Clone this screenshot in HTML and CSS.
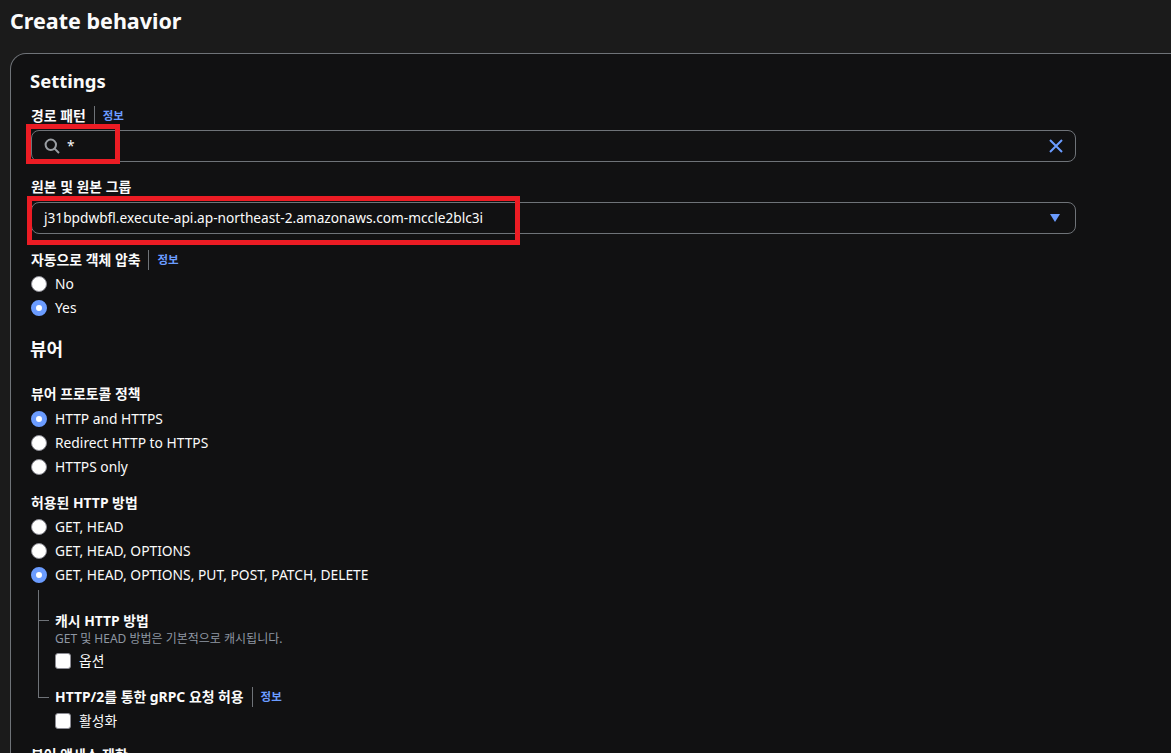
FILE: index.html
```html
<!DOCTYPE html>
<html lang="ko">
<head>
<meta charset="utf-8">
<title>Create behavior</title>
<link rel="stylesheet" href="styles.css">
</head>
<body>
<h1 class="page-title">Create behavior</h1>
<main class="card">
  <h2 class="card-title">Settings</h2>

  <div class="field field-path">
    <div class="label-row"><span class="label">경로 패턴</span><a class="info">정보</a></div>
    <div class="control control-search">
      <svg class="search-icon" width="16" height="16" viewBox="0 0 16 16" fill="none"><circle cx="6.8" cy="6.8" r="5.2" stroke="#9a9ea3" stroke-width="2"/><path d="M10.6 10.6 15 15" stroke="#9a9ea3" stroke-width="2"/></svg>
      <span class="control-text">*</span>
      <svg class="clear-icon" width="16" height="16" viewBox="0 0 16 16" fill="none"><path d="M2 2 14 14M14 2 2 14" stroke="#6b9cff" stroke-width="2"/></svg>
    </div>
    <span class="mark mark-path"></span>
  </div>

  <div class="field field-origin">
    <div class="label-row"><span class="label">원본 및 원본 그룹</span></div>
    <div class="control control-select">
      <span class="control-text">j31bpdwbfl.execute-api.ap-northeast-2.amazonaws.com-mccle2blc3i</span>
      <span class="caret"></span>
    </div>
    <span class="mark mark-origin"></span>
  </div>

  <div class="field field-compress">
    <div class="label-row"><span class="label">자동으로 객체 압축</span><a class="info">정보</a></div>
    <div class="option"><span class="radio"></span>No</div>
    <div class="option"><span class="radio radio-on"></span>Yes</div>
  </div>

  <h2 class="section-title">뷰어</h2>

  <div class="field field-policy">
    <div class="label-row"><span class="label">뷰어 프로토콜 정책</span></div>
    <div class="option"><span class="radio radio-on"></span>HTTP and HTTPS</div>
    <div class="option"><span class="radio"></span>Redirect HTTP to HTTPS</div>
    <div class="option"><span class="radio"></span>HTTPS only</div>
  </div>

  <div class="field field-methods">
    <div class="label-row"><span class="label">허용된 HTTP 방법</span></div>
    <div class="option"><span class="radio"></span>GET, HEAD</div>
    <div class="option"><span class="radio"></span>GET, HEAD, OPTIONS</div>
    <div class="option"><span class="radio radio-on"></span>GET, HEAD, OPTIONS, PUT, POST, PATCH, DELETE</div>
  </div>

  <div class="nested">
    <div class="nested-item nested-cache">
      <div class="label-row"><span class="label">캐시 HTTP 방법</span></div>
      <div class="desc">GET 및 HEAD 방법은 기본적으로 캐시됩니다.</div>
      <div class="option option-check"><span class="checkbox"></span>옵션</div>
    </div>
    <div class="nested-item nested-grpc">
      <div class="label-row"><span class="label">HTTP/2를 통한 gRPC 요청 허용</span><a class="info">정보</a></div>
      <div class="option option-check"><span class="checkbox"></span>활성화</div>
    </div>
  </div>

  <div class="label-row last-row"><span class="label">뷰어 액세스 제한</span></div>
</main>
</body>
</html>
```

FILE: styles.css
```css
* { box-sizing: border-box; }

html, body {
  height: 753px;
  overflow: hidden;
}

body {
  margin: 0;
  background: #1b1b1b;
  color: #fbfbfb;
  font-family: "Noto Sans", "Noto Sans CJK KR", sans-serif;
  font-size: 14px;
  width: 1171px;
}

.page-title {
  margin: 0;
  height: 53px;
  padding: 5px 0 0 10px;
  font-size: 21.5px;
  line-height: 32px;
  font-weight: 700;
}

.card {
  width: 1300px;
  margin-left: 10px;
  height: 760px;
  padding: 13px 20px 0 20px;
  background: #111112;
  border: 1px solid #6f7378;
  border-bottom: 0;
  border-radius: 16px 0 0 0;
}

.card-title {
  margin: 0 0 0 -1px;
  font-size: 18.5px;
  line-height: 28px;
  font-weight: 700;
}

.field { position: relative; }
.field-path { margin-top: 11px; }
.field-origin { margin-top: 15px; }
.field-compress { margin-top: 16px; }
.field-policy { margin-top: 22px; }
.field-methods { margin-top: 14px; }

.label-row {
  display: flex;
  align-items: center;
  height: 20px;
}

.label {
  font-size: 13.9px;
  line-height: 20px;
  font-weight: 700;
}

.info {
  margin-left: 8px;
  padding-left: 8px;
  border-left: 1px solid #6f7378;
  color: #6b9cff;
  font-size: 11.5px;
  font-weight: 700;
  line-height: 20px;
}

.control {
  display: flex;
  align-items: center;
  width: 1045px;
  height: 32px;
  margin-top: 4px;
  padding: 0 11px 0 12px;
  border: 1px solid #6f7378;
  border-radius: 8px;
}

.control-select {
  margin-top: 5px;
  padding-right: 14px;
}

.control-text {
  flex: 1;
  font-size: 13.7px;
  line-height: 20px;
}

.search-icon { margin-right: 7px; }
.clear-icon { flex: none; }

.caret {
  width: 0;
  height: 0;
  margin-right: 1px;
  border-left: 5.5px solid transparent;
  border-right: 5.5px solid transparent;
  border-top: 8px solid #6b9cff;
}

.mark {
  position: absolute;
  border: 5px solid #ec1c24;
  pointer-events: none;
}

.mark-path {
  left: -5px;
  top: 18px;
  width: 94px;
  height: 40px;
}

.mark-origin {
  left: -4px;
  top: 19px;
  width: 493px;
  height: 49px;
}

.option {
  display: flex;
  align-items: center;
  height: 24px;
  padding-bottom: 2px;
  font-size: 13.8px;
}

.label-row + .option { margin-top: 2px; }
.field-policy .label-row + .option { margin-top: 3px; }

.radio {
  flex: none;
  width: 16px;
  height: 16px;
  margin: 2px 8px 0 0;
  border-radius: 50%;
  background: #fff;
  border: 1px solid #8c8c94;
}

.radio-on {
  background: #fff;
  border: 5px solid #6b9cff;
}

.section-title {
  margin: 16px 0 0 -1px;
  font-size: 18px;
  line-height: 26px;
  font-weight: 700;
}

.nested {
  margin-top: 3px;
  margin-left: 7px;
  position: relative;
}

.nested::before {
  content: "";
  position: absolute;
  left: 0;
  top: 0;
  bottom: 36px;
  width: 1px;
  background: #6f7378;
}

.nested-item {
  position: relative;
  padding-left: 17px;
}

.nested-item::before {
  content: "";
  position: absolute;
  left: 0;
  top: 10px;
  width: 11px;
  height: 1px;
  background: #6f7378;
}

.nested-cache { padding-top: 21px; }
.nested-cache::before { top: 30px; }
.nested-grpc { margin-top: 14px; }

.desc {
  color: #8f97a3;
  font-size: 12px;
  line-height: 14px;
  margin-top: 1px;
}

.nested-item .option-check { margin-top: 2px; }
.nested-cache .option-check { margin-top: 3px; }

.checkbox {
  flex: none;
  width: 16px;
  height: 16px;
  margin: 2px 8px 0 0;
  border-radius: 3px;
  background: #fff;
  border: 1px solid #8c8c94;
}

.last-row { margin-top: 12px; }
```
